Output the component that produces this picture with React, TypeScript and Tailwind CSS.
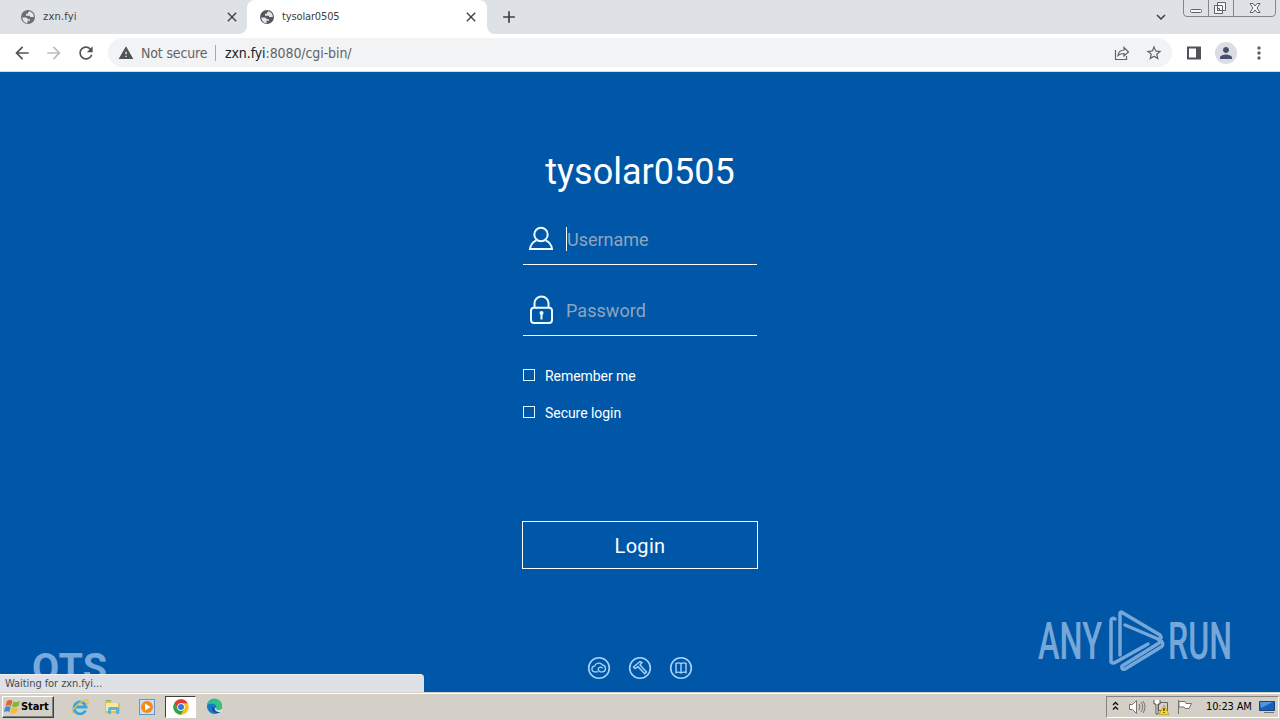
import React from "react";
import {
  MdAdd,
  MdArrowBack,
  MdArrowForward,
  MdClose,
  MdExpandMore,
  MdMoreVert,
  MdPerson,
  MdRefresh,
  MdStarBorder,
  MdWarning,
} from "react-icons/md";

const Globe = ({ color }: { color: string }) => (
  <svg className="size-4" viewBox="0 0 16 16">
    <circle cx="8" cy="8" r="7" fill={color} />
    <path d="M2.200 8.500h3.500q2 0 2 1.800H10v1.500H7.500v2.500Q3 13.500 2.200 8.500Z" fill="#e4e6ea" />
    <path d="M9.500 2.200 8 3.500v1.200H6v2h4V8h3.800Q14 4 9.500 2.200Z" fill="#e4e6ea" />
  </svg>
);

const TabBar = () => (
  <div className="flex h-[34px] shrink-0 items-stretch bg-[#dee1e6] font-['DejaVu_Sans_Condensed','DejaVu_Sans',sans-serif] text-[11px] text-[#3c4043]">
    <div className="flex w-[247px] items-center pr-[7px] pl-5">
      <Globe color="#6b6e72" />
      <span className="mt-px ml-[7px] flex-1 tracking-[0.2px]">zxn.fyi</span>
      <MdClose className="size-4 text-[#3c4043]" />
    </div>
    <div className="relative flex w-[240px] items-center rounded-t-lg bg-white pr-[8px] pl-3">
      <Globe color="#55585c" />
      <span className="mt-px ml-[7px] flex-1 tracking-[-0.14px]">tysolar0505</span>
      <MdClose className="size-4 text-[#3c4043]" />
      <svg className="absolute bottom-0 -left-2 size-2" viewBox="0 0 8 8">
        <path d="M8 0v8H0a8 8 0 0 0 8-8Z" fill="#fff" />
      </svg>
      <svg className="absolute -right-2 bottom-0 size-2" viewBox="0 0 8 8">
        <path d="M0 0v8h8a8 8 0 0 1-8-8Z" fill="#fff" />
      </svg>
    </div>
    <div className="flex flex-1 items-center pl-3">
      <MdAdd className="size-[20px] text-[#3c4043]" />
    </div>
    <div className="flex items-center pr-[13px]">
      <MdExpandMore className="size-[18px] text-[#3c4043]" />
    </div>
    <svg className="mr-[3px] h-[18px] w-[94px]" viewBox="0 0 94 18" fill="none" stroke="#84878c">
      <path d="M.5 0v13q0 3.500 3.500 3.500h85q3.500 0 3.500-3.500V0M25.500 0v16.500M50.500 0v16.500" />
      <g stroke="#606369" fill="#f5f6f8">
        <rect x="7.500" y="9.500" width="11" height="3" rx="1" />
        <path d="M34.500 2.500h8v8h-8zM31.500 5.500h8v8h-8zM34.500 8.500h2v2h-2z" />
        <path d="M67 3.500h3l2 2.500 2-2.500h3L74 8l3 4.500h-3L72 10l-2 2.500h-3L70 8Z" />
      </g>
    </svg>
  </div>
);

const Toolbar = () => (
  <div className="flex h-[38px] shrink-0 items-center border-b border-[#d5dbe3] bg-white pr-[11px] pl-3 text-[#5f6368]">
    <MdArrowBack className="size-5 text-[#505357]" />
    <MdArrowForward className="ml-3 size-5 text-[#bbbdc0]" />
    <MdRefresh className="ml-3 size-5 text-[#505357]" />
    <div className="ml-[12px] flex h-[29px] w-[1065px] items-center rounded-full bg-[#f1f3f4] pr-[9px] pl-[10px] font-['DejaVu_Sans_Condensed','DejaVu_Sans',sans-serif] text-sm">
      <MdWarning className="size-4 text-[#505357]" />
      <span className="ml-[7px] w-[67px] tracking-[-0.15px] whitespace-nowrap">Not secure</span>
      <span className="ml-[7px] h-4 w-px bg-[#a5a8ac]" />
      <span className="ml-[9px] flex-1 tracking-[-0.09px]">
        <span className="text-[#202124]">zxn.fyi</span>:8080/cgi-bin/
      </span>
      <svg className="size-4" viewBox="0 0 16 16" fill="none" stroke="#5f6368" strokeWidth="1.200">
        <path d="M1.500 5v9.500h11V11M4 10.500c.5-4 3-5.500 6-5.500V2.500L14.500 7 10 11V8.500c-2.500 0-4.500.500-6 2Z" />
      </svg>
      <MdStarBorder className="ml-[15px] size-[18px]" />
    </div>
    <svg className="ml-[14px] size-4" viewBox="0 0 16 16" fill="none" stroke="#505357">
      <path d="M2 2.500h12v11H2z" strokeWidth="2" />
      <path d="M12 2v12" strokeWidth="4" />
    </svg>
    <span className="ml-[13px] flex size-[22px] items-center justify-center rounded-full bg-[#dadde3]">
      <MdPerson className="size-[18px] text-[#47516b]" />
    </span>
    <MdMoreVert className="ml-[12px] size-5" />
  </div>
);

const UserIcon = () => (
  <svg className="h-7 w-6 overflow-visible" viewBox="0 0 24 28" fill="none" stroke="#effbff" strokeWidth="2">
    <circle cx="12" cy="9.500" r="6.700" />
    <path d="M7.500 15.300C4 16.800 1.500 19.800 1 24h22c-.5-4.200-3-7.200-6.500-8.700" />
  </svg>
);

const LockIcon = () => (
  <svg className="h-7 w-6 overflow-visible" viewBox="0 0 24 28" fill="none" stroke="#effbff" strokeWidth="2">
    <rect x="2" y="11.700" width="21" height="15.300" rx="3" />
    <path d="M5.500 11.500V7a7 6.500 0 0 1 14 0v4.500" />
    <circle cx="12.500" cy="17" r="2" fill="#effbff" stroke="none" />
    <path d="M12.500 17v6.500" />
  </svg>
);

const options = ["Remember me", "Secure login"];

const LoginForm = () => (
  <div className="flex w-[236px] flex-col pt-[79px] text-white">
    <h1 className="text-center text-[36px] leading-[42px] whitespace-nowrap">tysolar0505</h1>
    <div className="mx-px mt-[21px] flex h-[51px] items-center border-b border-white pb-0 pl-[6px]">
      <UserIcon />
      <span className="ml-[13px] h-6 w-px bg-white" />
      <span className="mt-[2px] text-lg text-[#8fa5bd]">Username</span>
    </div>
    <div className="mx-px mt-5 flex h-[51px] items-center border-b border-white pl-[6px]">
      <LockIcon />
      <span className="mt-[2px] ml-[13px] text-lg tracking-[0.05px] text-[#8fa5bd]">Password</span>
    </div>
    <div className="mt-[30px] flex flex-col gap-[17px]">
      {options.map((label) => (
        <div key={label} className="flex h-5 items-center text-sm tracking-[-0.05px]">
          <span className="mr-[10px] mb-[2px] ml-px size-[12px] border border-[#dff5ff]" />
          {label}
        </div>
      ))}
    </div>
    <div className="mt-[98px] flex h-12 items-center justify-center border border-white pt-[2px] text-xl tracking-[0.3px]">
      Login
    </div>
  </div>
);

const FooterLinks = () => (
  <div className="mt-[87px] flex gap-[17px]">
    <svg className="size-6" viewBox="0 0 24 24" fill="none" stroke="#a9d3fa" strokeWidth="1.600">
      <circle cx="12" cy="12" r="10.300" />
      <path d="M11 15.800H8a2.800 2.800 0 0 1-.5-5.600A4.500 4.500 0 0 1 15.500 9a3.500 3.500 0 0 1 .5 6.800h-2.500a2.300 2.300 0 1 1 2-3.500" strokeWidth="1.300" />
    </svg>
    <svg className="size-6" viewBox="0 0 24 24" fill="none" stroke="#a9d3fa" strokeWidth="1.600">
      <circle cx="12" cy="12" r="10.300" />
      <path d="m5.500 11 6.500-5.500 2 1-2 2.500 6.500 7-1.800 1.700-6.700-7-3 2Z" strokeWidth="1.400" />
    </svg>
    <svg className="size-6" viewBox="0 0 24 24" fill="none" stroke="#a9d3fa" strokeWidth="1.600">
      <circle cx="12" cy="12" r="10.300" />
      <path d="M12 7.500c-1.500-.7-3.500-.7-5 0v9c1.500-.5 3.500-.5 5 .5 1.500-1 3.500-1 5-.5v-9c-1.500-.7-3.500-.7-5 0Zm0 0v9" strokeWidth="1.400" />
    </svg>
  </div>
);

const Watermark = () => (
  <svg className="absolute right-[46px] bottom-[18px] h-[64px] w-[196px] font-['Roboto',sans-serif]" viewBox="0 0 196 64" fill="none">
    <g fill="#76a7d8" fontSize="52" fontWeight="500">
      <text x="0" y="49" textLength="64" lengthAdjust="spacingAndGlyphs">ANY</text>
      <text x="130" y="49" textLength="64" lengthAdjust="spacingAndGlyphs">RUN</text>
    </g>
    <g stroke="#76a7d8" strokeWidth="3.500" strokeLinejoin="round" strokeLinecap="round">
      <path d="M82 45V3q1-2 3 0l37 22q3 4-2 4L87 15" />
      <path d="M77 9q-4-2-4 2v41q2 2 5 0l32-18" />
      <path d="m120 29 4 3q2 3-1 5L87 59q-4 1-3-3l37-23" />
    </g>
  </svg>
);

const Page = () => (
  <div className="relative flex flex-1 flex-col items-center overflow-hidden bg-[#0057a8] font-['Roboto',sans-serif]">
    <LoginForm />
    <FooterLinks />
    <svg className="absolute bottom-0 left-[32px] h-10 w-[76px]" viewBox="0 0 76 40">
      <text x="0" y="29" fontSize="38" fontWeight="700" fill="#78a9db" fontFamily="Roboto, sans-serif" textLength="75" lengthAdjust="spacingAndGlyphs">
        QTS
      </text>
    </svg>
    <Watermark />
    <div className="absolute bottom-0 left-0 flex h-[18px] w-[424px] items-center rounded-tr border-t border-[#edf1f6] bg-[#dee1e6] pt-px pl-[5px] font-['DejaVu_Sans_Condensed','DejaVu_Sans',sans-serif] text-[11px] tracking-[-0.07px] text-[#484b4f]">
      Waiting for zxn.fyi...
    </div>
  </div>
);

const StartFlag = () => (
  <svg className="h-4 w-[17px]" viewBox="0 0 17 16">
    <path d="M3 2q3-2 5.500 0L7 7Q4.500 5.500 1.500 7Z" fill="#e8622b" />
    <path d="M9.500 2.500Q12 4 16 2l-1.500 5Q11 9 8 7.500Z" fill="#7cb83b" />
    <path d="M1.200 8q3-1.500 5.500 0l-1.500 5Q3 11.500 0 13Z" fill="#3d8bd4" />
    <path d="M7.700 8.500q3 1.500 6.500 0l-1.500 5q-3 2-6.500 0Z" fill="#f5be32" />
  </svg>
);

const IeIcon = () => (
  <svg className="size-[18px]" viewBox="0 0 18 18" fill="none">
    <path d="M14.500 12.500a6 6 0 1 1 .5-3.500H5" stroke="#35a7e0" strokeWidth="2.800" />
    <path d="M2 15.500C-1 12 10 2 16 2c2.500.5.5 4-1 5.500" stroke="#e8bf43" strokeWidth="1.300" />
  </svg>
);

const FolderIcon = () => (
  <svg className="size-[18px]" viewBox="0 0 18 18">
    <path d="M1 3h6l1 2h8v10H1Z" fill="#e4bd55" />
    <path d="M2 5h12v8H2Z" fill="#f9e8a0" />
    <path d="M4 16v-5q0-2 2-2h7q2 0 2 2v5h-3v-4H7v4Z" fill="#58b5d5" />
    <path d="M2 2h5v1H2Z" fill="#71b673" />
  </svg>
);

const MediaIcon = () => (
  <svg className="size-[18px]" viewBox="0 0 18 18">
    <rect x="1.500" y="1.500" width="15" height="15" fill="#c9e1f3" stroke="#6797c8" />
    <circle cx="9" cy="9" r="6" fill="#f28a1e" />
    <path d="m7 5.500 5.500 3.500L7 12.500Z" fill="#fff" />
  </svg>
);

const ChromeIcon = () => (
  <svg className="size-[16px]" viewBox="0 0 48 48">
    <circle cx="24" cy="24" r="23" fill="#fbc116" />
    <path d="M4 12.500A23 23 0 0 1 44 12.500H24L14 30Z" fill="#e33b2e" />
    <path d="M4 12.500 14 30A11.500 11.500 0 0 0 34 29.500L24 47A23 23 0 0 1 4 12.500Z" fill="#2da44f" />
    <circle cx="24" cy="24" r="11.500" fill="#fff" />
    <circle cx="24" cy="24" r="9" fill="#3479e5" />
  </svg>
);

const EdgeIcon = () => (
  <svg className="size-[17px]" viewBox="0 0 18 18">
    <circle cx="9" cy="9" r="8" fill="#1879c9" />
    <path d="M1 8a8 8 0 0 1 16 1q-.5 4-5 3.500-2-.5-1-2.500Q11 6.500 7.500 6 3 5.500 1 8Z" fill="#39c27d" />
    <path d="M1 8a8 8 0 0 1 11-6Q4 2 1 8Z" fill="#24a9c9" />
    <path d="M6.500 9q-1.500 6 5 7Q16 16 16 13q-3 2.500-6-.5Q8 10 6.500 9Z" fill="#124f9e" />
    <path d="M11 10q-1 2 1 2.500 3 .5 5-1v3l-2 .5q-5 0-6-4Z" fill="#d7ddda" />
  </svg>
);

const Tray = () => (
  <div className="flex h-[22px] w-[173px] items-center border border-t-[#87837d] border-r-white border-b-white border-l-[#87837d] pl-[4px]">
    <svg className="mb-[2px] h-3 w-[9px]" viewBox="0 0 9 12" fill="none" stroke="#111" strokeWidth="1.400">
      <path d="m2 5 2.500-2.500L7 5M2 9.500 4.500 7 7 9.500" />
    </svg>
    <svg className="ml-[8px] h-4 w-[18px]" viewBox="0 0 18 16" fill="#fff" stroke="#77746f">
      <path d="M1.500 5.500h3l4-4v13l-4-4h-3Z" />
      <path d="M11 5q2 3 0 6M13 3q3.500 5 0 10M15 2q4 6 0 12" fill="none" />
    </svg>
    <svg className="ml-[7px] size-4" viewBox="0 0 16 16">
      <path d="M5.500 3.500h9v8h-9z" fill="#d6d3ce" stroke="#66635e" />
      <path d="M1 1v4h2v10h2V5h2V1" fill="#fff" stroke="#55524d" />
      <path d="m11 6 5 9.500H6Z" fill="#f8d726" stroke="#b28c13" strokeWidth=".6" />
      <path d="M11 9v3m0 1v1" stroke="#443600" strokeWidth="1.300" />
    </svg>
    <svg className="ml-[7px] h-4 w-[17px]" viewBox="0 0 17 16" fill="#fff" stroke="#77746f">
      <path d="M2.500 1v14M3 2.500h6l1 2h5.500L13 9.500H9l-1-1.500H3Z" />
    </svg>
    <span className="mt-[2px] ml-[13px] w-[48px] text-[11px] tracking-[-0.15px] whitespace-nowrap">10:23 AM</span>
    <svg className="ml-[5px] h-[14px] w-4" viewBox="0 0 16 14">
      <path d="M.5 1.500h15v9H.5Z" fill="#1760ba" stroke="#18457f" />
      <path d="M1 2h13L2 8Z" fill="#4f96dd" />
      <path d="M5 12.500h10" stroke="#77746f" />
    </svg>
  </div>
);

const Taskbar = () => (
  <div className="flex h-7 shrink-0 items-center border-t border-[#d4d0c8] bg-[#d4d0c8] pr-px pl-[2px] font-['DejaVu_Sans_Condensed','DejaVu_Sans',sans-serif] text-black shadow-[inset_0_1px_0_#fff]">
    <div className="flex h-[22px] w-[52px] items-center border border-t-white border-r-[#404040] border-b-[#404040] border-l-white pl-px shadow-[inset_-1px_-1px_0_#808080]">
      <StartFlag />
      <span className="mt-[2px] text-[11px] font-bold tracking-[-0.1px]">Start</span>
    </div>
    <div className="ml-[17px] flex flex-1 items-center">
      <IeIcon />
      <div className="ml-[15px]"><FolderIcon /></div>
      <div className="ml-[16px]"><MediaIcon /></div>
      <div className="ml-[9px] flex h-[22px] w-[31px] items-center justify-center border border-t-[#404040] border-r-white border-b-white border-l-[#404040] bg-white pt-px">
        <ChromeIcon />
      </div>
      <div className="ml-[10px]"><EdgeIcon /></div>
    </div>
    <Tray />
  </div>
);

const App = () => {
  return (
    <div className="flex h-[720px] w-[1280px] flex-col overflow-hidden">
      <TabBar />
      <Toolbar />
      <Page />
      <Taskbar />
    </div>
  );
};

export default App;
